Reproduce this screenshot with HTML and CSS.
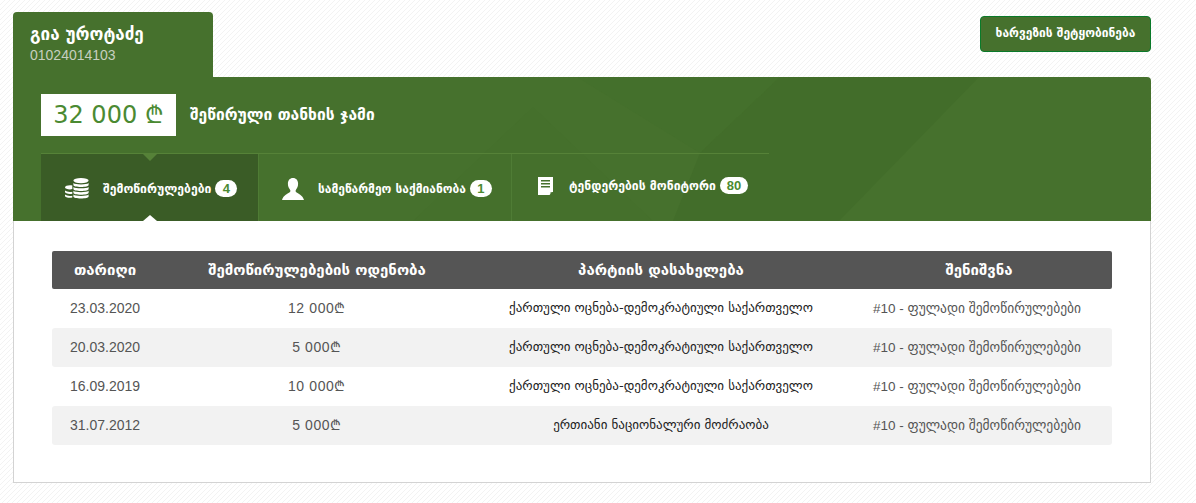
FILE: index.html
```html
<!DOCTYPE html>
<html lang="ka">
<head>
  <meta charset="UTF-8" />
  <meta name="viewport" content="width=device-width, initial-scale=1.0" />
  <title>გია უროტაძე</title>
  <link rel="stylesheet" href="styles.css">
</head>
<body>
  <div class="wrapper">

    <!-- Top row -->
    <div class="top-row">
      <div class="person">
        <div class="person-name">გია უროტაძე</div>
        <div class="person-id">01024014103</div>
      </div>
      <a class="report-btn" href="#">ხარვეზის შეტყობინება</a>
    </div>

    <!-- Green panel -->
    <section class="panel">
      <svg class="panel-bg" viewBox="0 0 1138 144" preserveAspectRatio="none" aria-hidden="true">
        <polygon points="564,0 767,0 687,76" fill="#3f6a28" opacity="0.15"/>
        <polygon points="767,0 966,0 826,144 660,144 687,76" fill="#3f6a28" opacity="0.55"/>
        <polygon points="400,144 520,30 640,144" fill="#3f6a28" opacity="0.08"/>
      </svg>

      <div class="total">
        <div class="total-amount">32 000 ₾</div>
        <div class="total-label">შეწირული თანხის ჯამი</div>
      </div>

      <div class="tabs">
        <a class="tab tab-active" href="#">
          <svg class="tab-icon icon-coins" viewBox="0 0 24 21">
            <g fill="#fff">
              <path d="M0 9.5c0-1.3 2.3-2.2 5-2.2.8 0 1.6.1 2.3.2v3.6c-.7.2-1.5.3-2.3.3-2.7 0-5-.8-5-1.9z"/>
              <path d="M0 12.6c1 .9 3 1.3 5 1.3.8 0 1.6-.1 2.3-.2v2.1c-.7.2-1.5.2-2.3.2-2.7 0-5-.8-5-1.9z"/>
              <path d="M0 16.6c1 .9 3 1.3 5 1.3.8 0 1.6-.1 2.3-.2v1.9c-.7.2-1.5.2-2.3.2-2.7 0-5-.8-5-1.9z"/>
              <ellipse cx="16" cy="2.6" rx="7.6" ry="2.6"/>
              <path d="M8.4 5c1.2 1 4 1.4 7.6 1.4s6.4-.4 7.6-1.4v2c0 1.2-3.4 2-7.6 2s-7.6-.8-7.6-2z"/>
              <path d="M8.4 8.9c1.2 1 4 1.4 7.6 1.4s6.4-.4 7.6-1.4v2c0 1.2-3.4 2-7.6 2s-7.6-.8-7.6-2z"/>
              <path d="M8.4 12.8c1.2 1 4 1.4 7.6 1.4s6.4-.4 7.6-1.4v2c0 1.2-3.4 2-7.6 2s-7.6-.8-7.6-2z"/>
              <path d="M8.4 16.6c1.2 1 4 1.4 7.6 1.4s6.4-.4 7.6-1.4v2c0 1.2-3.4 2-7.6 2s-7.6-.8-7.6-2z"/>
            </g>
          </svg>
          <span class="tab-text">შემოწირულებები</span>
          <span class="badge">4</span>
        </a>
        <a class="tab tab-second" href="#">
          <svg class="tab-icon icon-user" viewBox="0 0 22 22">
            <path fill="#fff" d="M11 0c3.200 0 5.100 2.400 5.100 5.700 0 2.300-.8 4.300-2 5.700-.7.800-.7 2.300.2 2.900 1.600 1.100 6.300 2.800 7.700 7.700H0c1.400-4.900 6.100-6.600 7.700-7.700.9-.6.900-2.100.2-2.900-1.200-1.400-2-3.400-2-5.700C5.900 2.400 7.800 0 11 0z"/>
          </svg>
          <span class="tab-text">სამეწარმეო საქმიანობა</span>
          <span class="badge">1</span>
        </a>
        <a class="tab tab-third" href="#">
          <svg class="tab-icon icon-doc" viewBox="0 0 15 18">
            <path fill="#fff" d="M0 0h15v14.500L11.500 18H0z"/>
            <path fill="#46712d" d="M3 3h9v1.500H3zM3 6h9v1.500H3zM3 9h9v1.500H3zM12.500 15.200H15V16l-1.700 2h-.8z"/>
          </svg>
          <span class="tab-text">ტენდერების მონიტორი</span>
          <span class="badge">80</span>
        </a>
      </div>
    </section>

    <!-- Donations table -->
    <section class="card">
      <table class="donations">
        <colgroup>
          <col class="col-date">
          <col class="col-amount">
          <col class="col-party">
          <col class="col-note">
        </colgroup>
        <thead>
          <tr>
            <th>თარიღი</th>
            <th>შემოწირულებების ოდენობა</th>
            <th>პარტიის დასახელება</th>
            <th>შენიშვნა</th>
          </tr>
        </thead>
        <tbody>
          <tr>
            <td class="cell-date">23.03.2020</td>
            <td class="cell-amount">12 000₾</td>
            <td class="cell-party">ქართული ოცნება-დემოკრატიული საქართველო</td>
            <td class="cell-note">#10 - ფულადი შემოწირულებები</td>
          </tr>
          <tr>
            <td class="cell-date">20.03.2020</td>
            <td class="cell-amount">5 000₾</td>
            <td class="cell-party">ქართული ოცნება-დემოკრატიული საქართველო</td>
            <td class="cell-note">#10 - ფულადი შემოწირულებები</td>
          </tr>
          <tr>
            <td class="cell-date">16.09.2019</td>
            <td class="cell-amount">10 000₾</td>
            <td class="cell-party">ქართული ოცნება-დემოკრატიული საქართველო</td>
            <td class="cell-note">#10 - ფულადი შემოწირულებები</td>
          </tr>
          <tr>
            <td class="cell-date">31.07.2012</td>
            <td class="cell-amount">5 000₾</td>
            <td class="cell-party">ერთიანი ნაციონალური მოძრაობა</td>
            <td class="cell-note">#10 - ფულადი შემოწირულებები</td>
          </tr>
        </tbody>
      </table>
    </section>

  </div>
</body>
</html>
```

FILE: styles.css
```css
* {
  box-sizing: border-box;
}
html, body {
  margin: 0;
  height: 503px;
  overflow: hidden;
}
body {
  font-family: "Liberation Sans", "DejaVu Sans", sans-serif;
  background-color: #fff;
  background-image: linear-gradient(135deg, #f3f3f3 10%, #fff 10%, #fff 50%, #f3f3f3 50%, #f3f3f3 60%, #fff 60%);
  background-size: 5px 5px;
}
a {
  text-decoration: none;
  color: inherit;
}
.wrapper {
  width: 1138px;
  margin-left: 13px;
  padding-top: 12px;
}

/* Top row */
.top-row {
  display: flex;
  justify-content: space-between;
  align-items: flex-start;
}
.person {
  width: 200px;
  height: 65px;
  padding: 12px 17px 0;
  background-color: #46712d;
  border-radius: 4px 4px 0 0;
  color: #fff;
}
.person-name {
  font-family: "DejaVu Sans", sans-serif;
  font-size: 17px;
  font-weight: bold;
  line-height: 20px;
}
.person-id {
  margin-top: 3px;
  font-size: 14px;
  line-height: 16px;
  color: #c6cfc0;
}
.report-btn {
  display: block;
  width: 171px;
  height: 36px;
  margin-top: 4px;
  background-color: #46712d;
  border: 1px solid #0a7a2a;
  border-radius: 4px;
  color: #fff;
  font-family: "DejaVu Sans", sans-serif;
  font-size: 12px;
  font-weight: bold;
  line-height: 32px;
  text-align: center;
}

/* Panel */
.panel {
  position: relative;
  height: 144px;
  padding: 17px 0 0 28px;
  background-color: #46712d;
  border-radius: 0 4px 0 0;
  overflow: hidden;
}
.panel-bg {
  position: absolute;
  left: 0;
  top: 0;
  width: 100%;
  height: 100%;
}
.total {
  position: relative;
  display: flex;
  align-items: center;
  gap: 14px;
  height: 42px;
}
.total-amount {
  width: 135px;
  height: 42px;
  background-color: #fff;
  color: #4b8a32;
  font-family: "DejaVu Sans", sans-serif;
  font-size: 24px;
  line-height: 42px;
  text-align: center;
}
.total-label {
  color: #fff;
  font-family: "DejaVu Sans", sans-serif;
  font-size: 15.6px;
  font-weight: bold;
}

/* Tabs */
.tabs {
  position: relative;
  display: flex;
  width: 728px;
  height: 68px;
  margin-top: 17px;
  border-top: 1px solid #568238;
}
.tab {
  position: relative;
  display: flex;
  align-items: center;
  padding-top: 2px;
  color: #fff;
  font-family: "DejaVu Sans", sans-serif;
  font-size: 12.2px;
  font-weight: bold;
  border-right: 1px solid #4f7c35;
}
.tab-active {
  width: 218px;
  padding-left: 24px;
  background-color: #3a5c26;
}
.tab-active::before {
  content: "";
  position: absolute;
  left: 102px;
  top: 0;
  border-left: 7px solid transparent;
  border-right: 7px solid transparent;
  border-top: 7px solid #568238;
}
.tab-active::after {
  content: "";
  position: absolute;
  left: 102px;
  bottom: 0;
  border-left: 7px solid transparent;
  border-right: 7px solid transparent;
  border-bottom: 6px solid #fff;
}
.tab-second {
  width: 253px;
  padding-left: 23px;
  font-size: 12px;
}
.tab-third {
  width: 257px;
  padding-left: 26px;
  padding-bottom: 6px;
  border-right: 0;
}
.tab-icon {
  flex: none;
}
.icon-coins {
  width: 24px;
  height: 21px;
  margin-right: 14px;
}
.icon-user {
  width: 22px;
  height: 22px;
  margin-right: 14px;
}
.icon-doc {
  width: 15px;
  height: 18px;
  margin-right: 16px;
}
.badge {
  min-width: 22px;
  height: 17px;
  margin-left: 4px;
  padding: 0 7px;
  background-color: #fff;
  border-radius: 9px;
  color: #4b8a32;
  font-family: "Liberation Sans", sans-serif;
  font-size: 13px;
  line-height: 17px;
  text-align: center;
}

/* Card with table */
.card {
  height: 262px;
  padding: 30px 38px 0;
  background-color: #fff;
  border: 1px solid #d3d3d3;
  border-top: 0;
}
.donations {
  width: 1060px;
  table-layout: fixed;
  border-collapse: separate;
  border-spacing: 0;
}
.col-date { width: 106px; }
.col-amount { width: 318px; }
.col-party { width: 370px; }
.col-note { width: 266px; }
.donations th {
  height: 38px;
  padding: 0;
  background-color: #555;
  color: #fff;
  font-family: "DejaVu Sans", sans-serif;
  font-size: 15px;
  font-weight: bold;
}
.donations th:first-child {
  border-radius: 2px 0 0 2px;
}
.donations th:last-child {
  border-radius: 0 2px 2px 0;
}
.donations td {
  height: 39px;
  padding: 0 0 2px;
  color: #555;
  font-size: 14px;
  text-align: center;
}
.donations tbody tr:nth-child(even) td {
  background-color: #f2f2f2;
}
.donations tbody tr:nth-child(even) td:first-child {
  border-radius: 3px 0 0 3px;
}
.donations tbody tr:nth-child(even) td:last-child {
  border-radius: 0 3px 3px 0;
}
.donations .cell-date {
  padding-left: 18px;
  text-align: left;
}
.donations .cell-amount {
  letter-spacing: 0.6px;
}
.donations .cell-party {
  color: #222;
  font-family: "DejaVu Sans", sans-serif;
  font-size: 13px;
}
.donations .cell-note {
  padding-right: 4px;
  font-size: 13.5px;
}
```
